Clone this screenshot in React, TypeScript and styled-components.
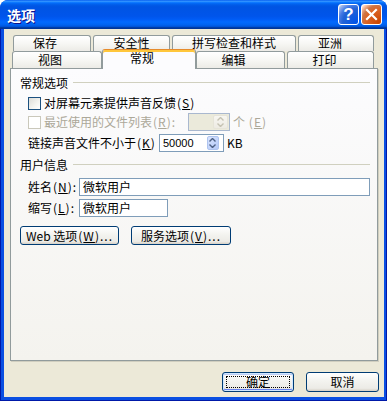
import React from 'react';
import styled, { createGlobalStyle } from 'styled-components';

const Global = createGlobalStyle`
  html, body { margin: 0; padding: 0; background: #ffffff; }
  body { font-family: "Noto Sans CJK SC", "Noto Sans", sans-serif; font-size: 12px; color: #000; }
  * { box-sizing: border-box; }
`;

const Window = styled.div`
  width: 387px;
  height: 401px;
  display: flex;
  flex-direction: column;
  background: #0a4be0;
  border-radius: 8px 8px 0 0;
  overflow: hidden;
`;

const TitleBar = styled.div`
  height: 29px;
  flex: none;
  display: flex;
  align-items: center;
  gap: 2px;
  padding: 0 5px 0 7px;
  background: linear-gradient(
    180deg,
    #0058ee 0%,
    #3593ff 4%,
    #288eff 6%,
    #127dff 8%,
    #036ffc 10%,
    #0262ee 14%,
    #0057e5 20%,
    #0054e3 24%,
    #0055eb 56%,
    #005bf5 66%,
    #026afe 76%,
    #0062ef 86%,
    #0052d6 92%,
    #0040ab 94%,
    #003092 100%
  );
`;

const TitleText = styled.div`
  flex: 1;
  color: #ffffff;
  font-weight: bold;
  font-size: 14px;
  line-height: 16px;
  padding-top: 1px;
  text-shadow: 1px 1px #0f1089;
`;

const CaptionButton = styled.div<{ $kind: 'help' | 'close' }>`
  width: 21px;
  height: 21px;
  border: 1px solid #ffffff;
  border-radius: 3px;
  display: flex;
  align-items: center;
  justify-content: center;
  color: #ffffff;
  font-family: "Liberation Sans", Arial, sans-serif;
  font-weight: bold;
  font-size: 17px;
  line-height: 1;
  background: ${(p) =>
    p.$kind === 'help'
      ? 'radial-gradient(circle at 90% 90%, #0054e9 0%, #2263d5 55%, #4479e4 70%, #a3bbec 90%, #ffffff 100%)'
      : 'radial-gradient(circle at 90% 90%, #cc4600 0%, #dc6527 55%, #cd7546 70%, #ffccb2 90%, #ffffff 100%)'};
`;

const Frame = styled.div`
  flex: 1;
  display: flex;
  padding: 0 4px 4px 4px;
  background: #0a4fe2;
  box-shadow: inset 1px 0 #0019a8, inset -1px 0 #0019a8, inset 0 -1px #0019a8;
`;

const Body = styled.div`
  flex: 1;
  display: flex;
  flex-direction: column;
  background: #ece9d8;
  padding: 6px 5px 5px 6px;
`;

const TabStrip = styled.div`
  display: flex;
  flex-direction: column;
  flex: none;
`;

const TabRow = styled.div<{ $h: number; $indent: number }>`
  display: flex;
  align-items: flex-end;
  height: ${(p) => p.$h}px;
  padding-left: ${(p) => p.$indent}px;
  gap: 2px;
`;

const Tab = styled.div<{ $w: number; $h: number; $pr?: number; $pb?: number; $active?: boolean; $ml?: number }>`
  width: ${(p) => p.$w}px;
  height: ${(p) => p.$h}px;
  margin-left: ${(p) => p.$ml ?? 0}px;
  flex: none;
  display: flex;
  align-items: center;
  justify-content: center;
  padding-right: ${(p) => p.$pr ?? 0}px;
  padding-bottom: ${(p) => p.$pb ?? 0}px;
  border: 1px solid #919b9c;
  border-bottom: none;
  border-radius: 3px 3px 0 0;
  font-size: 12px;
  line-height: 12px;
  background: linear-gradient(180deg, #ffffff 0%, #f7f7f4 50%, #ecebe6 100%);
  ${(p) =>
    p.$active &&
    `
    position: relative;
    z-index: 1;
    margin-bottom: -1px;
    border-top: 1px solid #e68b2c;
    box-shadow: inset 0 2px 0 #ffc73c;
    background: #fcfcfe;
  `}
`;

const Panel = styled.div`
  flex: 1;
  margin-right: 1px;
  display: flex;
  flex-direction: column;
  border: 1px solid #919b9c;
  background: linear-gradient(180deg, #fcfcfe 0%, #f4f3ee 100%);
  box-shadow: 1px 1px 0 #d0cebf;
  padding: 7px 7px 0 9px;
`;

const GroupHeader = styled.div<{ $mt: number }>`
  display: flex;
  align-items: center;
  gap: 5px;
  height: 14px;
  margin-top: ${(p) => p.$mt}px;
  line-height: 14px;
`;

const Rule = styled.div`
  flex: 1;
  height: 1px;
  background: #d0d0bf;
  margin-top: -1px;
`;

const Row = styled.div<{ $mt: number; $indent?: number; $gap?: number }>`
  display: flex;
  align-items: center;
  height: 18px;
  margin-top: ${(p) => p.$mt}px;
  padding-left: ${(p) => p.$indent ?? 8}px;
  gap: ${(p) => p.$gap ?? 0}px;
  line-height: 14px;
`;

const Check = styled.span<{ $disabled?: boolean }>`
  width: 13px;
  height: 13px;
  flex: none;
  margin-right: 3px;
  border: 1px solid ${(p) => (p.$disabled ? '#cac8bb' : '#1c5180')};
  background: ${(p) =>
    p.$disabled ? '#ffffff' : 'linear-gradient(135deg, #dcdcd7 0%, #f4f4f0 60%, #ffffff 100%)'};
`;

const Label = styled.span<{ $disabled?: boolean; $w?: number; $ml?: number }>`
  color: ${(p) => (p.$disabled ? '#aca899' : '#000000')};
  white-space: nowrap;
  margin-left: ${(p) => p.$ml ?? 0}px;
  ${(p) => (p.$w ? `width: ${p.$w}px; flex: none;` : '')}
`;

const Key = styled.span`
  letter-spacing: 1px;
  padding-left: 1px;
  u { text-underline-offset: 1px; }
`;

const SpinField = styled.div<{ $w: number; $disabled?: boolean; $ml?: number }>`
  width: ${(p) => p.$w}px;
  height: 18px;
  flex: none;
  margin-left: ${(p) => p.$ml ?? 0}px;
  display: flex;
  align-items: stretch;
  padding: 1px;
  border: 1px solid ${(p) => (p.$disabled ? '#a9b8cf' : '#7f9db9')};
  background: ${(p) => (p.$disabled ? '#ebeadb' : '#ffffff')};
`;

const SpinValue = styled.div`
  flex: 1;
  padding-left: 2px;
  font-family: "Liberation Sans", Arial, sans-serif;
  font-size: 11px;
  line-height: 14px;
`;

const SpinButtons = styled.div<{ $disabled?: boolean; $mr: number }>`
  width: ${(p) => (p.$disabled ? 15 : 12)}px;
  margin-right: ${(p) => p.$mr}px;
  display: flex;
  flex-direction: column;
  align-items: center;
  justify-content: center;
  gap: 2px;
  border-radius: 2px;
  border: 1px solid ${(p) => (p.$disabled ? '#e6e4d8' : '#aec4ef')};
  background: ${(p) =>
    p.$disabled
      ? 'linear-gradient(180deg, #f7f6f1, #edebe3)'
      : 'linear-gradient(135deg, #d9e4fd 0%, #c1d3fb 60%, #b4c8f6 100%)'};
`;

const TextInput = styled.div<{ $w: number }>`
  width: ${(p) => p.$w}px;
  height: 18px;
  flex: none;
  border: 1px solid #7f9db9;
  background: #ffffff;
  padding-left: 3px;
  line-height: 16px;
`;

const PushButton = styled.div<{ $w: number; $h: number; $default?: boolean }>`
  position: relative;
  width: ${(p) => p.$w}px;
  height: ${(p) => p.$h}px;
  flex: none;
  display: flex;
  align-items: center;
  justify-content: center;
  border: 1px solid #003c74;
  border-radius: 3px;
  background: linear-gradient(180deg, #ffffff 0%, #f3f3ef 45%, #ecebe6 85%, #d6d0c5 100%);
  line-height: 14px;
  white-space: nowrap;
  ${(p) =>
    p.$default &&
    `
    box-shadow: inset 0 0 0 1px #cee7ff, inset 0 -1px 0 1px #6982ee, inset 0 1px 0 1px #bccbf4;
    &::after {
      content: '';
      position: absolute;
      inset: 3px;
      border: 1px dotted #000000;
    }
  `}
`;

const ButtonRow = styled.div<{ $mt: number; $gap: number; $end?: boolean }>`
  display: flex;
  justify-content: ${(p) => (p.$end ? 'flex-end' : 'flex-start')};
  gap: ${(p) => p.$gap}px;
  margin-top: ${(p) => p.$mt}px;
  flex: none;
`;

const Arrow = ({ up, color }: { up: boolean; color: string }) => (
  <svg width="7" height="4" viewBox="0 0 7 4">
    <path
      d={up ? 'M0.5 3.5 L3.5 0.5 L6.5 3.5' : 'M0.5 0.5 L3.5 3.5 L6.5 0.5'}
      fill="none"
      stroke={color}
      strokeWidth="1.4"
    />
  </svg>
);

const Mn = ({ k, tail = '' }: { k: string; tail?: string }) => (
  <Key>
    (<u>{k}</u>){tail}
  </Key>
);

export default function App() {
  return (
    <>
      <Global />
      <Window>
        <TitleBar>
          <TitleText>选项</TitleText>
          <CaptionButton $kind="help">?</CaptionButton>
          <CaptionButton $kind="close">
            <svg width="13" height="13" viewBox="0 0 13 13">
              <path d="M2 2 L11 11 M11 2 L2 11" stroke="#ffffff" strokeWidth="2.2" strokeLinecap="square" />
            </svg>
          </CaptionButton>
        </TitleBar>
        <Frame>
          <Body>
            <TabStrip>
              <TabRow $h={16} $indent={3}>
                <Tab $w={78} $h={16} $pr={14} $pb={2}>保存</Tab>
                <Tab $w={77} $h={16} $pb={2}>安全性</Tab>
                <Tab $w={124} $h={16} $pb={2}>拼写检查和样式</Tab>
                <Tab $w={76} $h={16} $pr={12} $pb={2}>亚洲</Tab>
              </TabRow>
              <TabRow $h={17} $indent={2}>
                <Tab $w={90} $h={17} $pr={14}>视图</Tab>
                <Tab $w={94} $h={20} $pr={14} $pb={4} $active $ml={-2}>常规</Tab>
                <Tab $w={89} $h={17} $pr={14} $ml={-2}>编辑</Tab>
                <Tab $w={87} $h={17} $pr={12}>打印</Tab>
              </TabRow>
            </TabStrip>
            <Panel>
              <GroupHeader $mt={0}>
                <span>常规选项</span>
                <Rule />
              </GroupHeader>
              <Row $mt={4}>
                <Check />
                <Label>
                  对屏幕元素提供声音反馈<Mn k="S" />
                </Label>
              </Row>
              <Row $mt={1}>
                <Check $disabled />
                <Label $disabled>
                  最近使用的文件列表<Mn k="R" tail=":" />
                </Label>
                <SpinField $w={42} $disabled $ml={12}>
                  <SpinValue />
                  <SpinButtons $disabled $mr={0}>
                    <Arrow up color="#c5c2b2" />
                    <Arrow up={false} color="#c5c2b2" />
                  </SpinButtons>
                </SpinField>
                <Label $disabled $ml={3}>
                  个 <Mn k="E" />
                </Label>
              </Row>
              <Row $mt={3} $gap={3}>
                <Label>
                  链接声音文件不小于<Mn k="K" />
                </Label>
                <SpinField $w={65}>
                  <SpinValue>50000</SpinValue>
                  <SpinButtons $mr={3}>
                    <Arrow up color="#4d6185" />
                    <Arrow up={false} color="#4d6185" />
                  </SpinButtons>
                </SpinField>
                <Label>KB</Label>
              </Row>
              <GroupHeader $mt={6}>
                <span>用户信息</span>
                <Rule />
              </GroupHeader>
              <Row $mt={6}>
                <Label $w={51}>
                  姓名<Mn k="N" tail=":" />
                </Label>
                <TextInput $w={291}>微软用户</TextInput>
              </Row>
              <Row $mt={3}>
                <Label $w={51}>
                  缩写<Mn k="L" tail=":" />
                </Label>
                <TextInput $w={89}>微软用户</TextInput>
              </Row>
              <ButtonRow $mt={9} $gap={12}>
                <PushButton $w={99} $h={19}>
                  Web 选项<Mn k="W" tail="..." />
                </PushButton>
                <PushButton $w={100} $h={19}>
                  服务选项<Mn k="V" tail="..." />
                </PushButton>
              </ButtonRow>
            </Panel>
            <ButtonRow $mt={11} $gap={12} $end>
              <PushButton $w={72} $h={20} $default>
                确定
              </PushButton>
              <PushButton $w={73} $h={20}>
                取消
              </PushButton>
            </ButtonRow>
          </Body>
        </Frame>
      </Window>
    </>
  );
}
